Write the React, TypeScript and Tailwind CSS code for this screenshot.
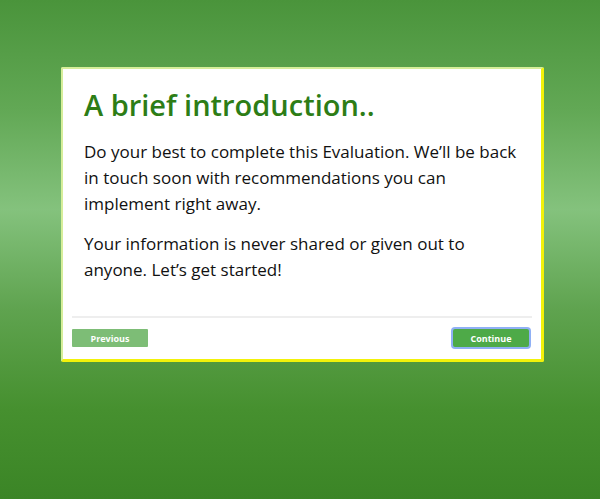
import React from 'react'

const App = () => {
  return (
    <div className="min-h-screen w-full bg-[linear-gradient(180deg,#4a943b_0%,#62a855_22%,#84c27d_42%,#5fa34f_62%,#46902f_82%,#3b8526_100%)] flex justify-center pt-[67px] pl-[5px] font-['Open_Sans','Noto_Sans',sans-serif]">
      <div className="w-[483px] h-[295px] bg-white border-l-2 border-t-2 border-r-[3px] border-b-[3px] border-l-[#d6ee9a] border-t-[#d6ee9a] border-r-[#f2f20a] border-b-[#f2f20a] rounded-[2px] flex flex-col">
        {/* Body */}
        <div className="px-[21px] pt-[18px] flex-1">
          <h1 className="text-[29px] leading-[36px] font-semibold text-[#2d7d16]">
            A brief introduction..
          </h1>
          <div className="mt-[16px] text-[17px] leading-[26px] text-[#111] space-y-[14px]">
            <p>
              Do your best to complete this Evaluation. We’ll be back in touch soon with recommendations you can
              implement right away.
            </p>
            <p>Your information is never shared or given out to anyone. Let’s get started!</p>
          </div>
        </div>

        {/* Footer */}
        <div className="mx-[9px] border-t-2 border-[#eeeeee] flex items-center justify-between pt-[11px] pb-[12px]">
          <button className="w-[76px] h-[18px] bg-[#7dbd76] rounded-[1px] text-white text-[9px] font-bold leading-none">
            Previous
          </button>
          <button className="w-[76px] h-[18px] bg-[#4eaa48] rounded-[2px] ring-2 ring-[#8fb0f5] text-white text-[9px] font-bold leading-none mr-[3px]">
            Continue
          </button>
        </div>
      </div>
    </div>
  )
}

export default App
